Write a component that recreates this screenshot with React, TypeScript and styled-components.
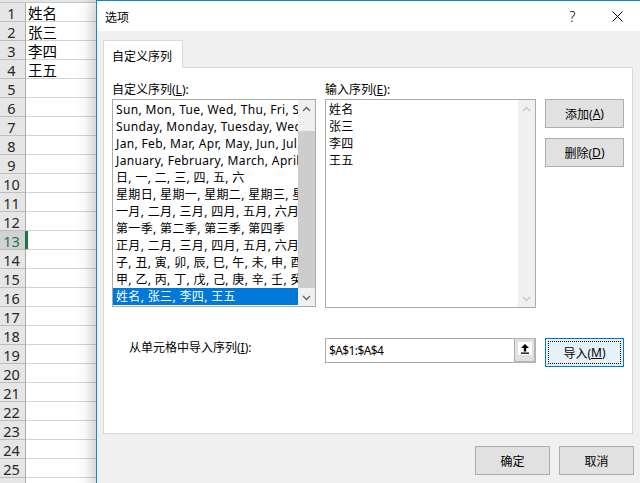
import styled, { createGlobalStyle } from 'styled-components';

const GlobalStyle = createGlobalStyle`
  html, body {
    margin: 0;
    padding: 0;
    width: 640px;
    height: 483px;
    overflow: hidden;
    background: #ffffff;
  }
  body {
    font-family: "Noto Sans", "Noto Sans CJK SC", sans-serif;
    color: #000;
  }
`;

const UI_FONT = `"Noto Sans", "Noto Sans CJK SC", sans-serif`;

// ---------- spreadsheet behind the dialog ----------
const Screen = styled.div`
  position: relative;
  width: 640px;
  height: 483px;
  overflow: hidden;
`;

const Sheet = styled.div`
  display: flex;
  flex-direction: column;
`;

const ColumnHeaderStrip = styled.div`
  height: 2px;
  width: 100%;
  background: #e6e6e6;
  border-bottom: 1px solid #c6c6c6;
`;

const SheetRow = styled.div`
  display: flex;
  height: 19px;
  flex-shrink: 0;
`;

const RowHeader = styled.div<{ $active?: boolean }>`
  box-sizing: border-box;
  width: 26px;
  height: 19px;
  background: ${(p) => (p.$active ? '#d2d2d2' : '#e6e6e6')};
  border-right: 1px solid ${(p) => (p.$active ? '#217346' : '#ababab')};
  border-bottom: 1px solid #bdbdbd;
  color: ${(p) => (p.$active ? '#217346' : '#262626')};
  font-family: "Noto Sans", sans-serif;
  font-size: 14.5px;
  line-height: 21px;
  text-align: center;
  padding-right: 2px;
  overflow: hidden;
`;

const Cell = styled.div<{ $active?: boolean }>`
  box-sizing: border-box;
  width: 200px;
  height: 19px;
  border-bottom: 1px solid #d4d4d4;
  box-shadow: ${(p) => (p.$active ? 'inset 2px 0 0 #217346' : 'none')};
  padding-left: 2px;
  font-family: "Noto Sans CJK SC", sans-serif;
  font-size: 14.5px;
  line-height: 20px;
  white-space: nowrap;
`;

// ---------- dialog window ----------
const Dialog = styled.div`
  position: absolute;
  left: 96px;
  top: 0;
  box-sizing: border-box;
  width: 544px;
  height: 490px;
  background: #f0f0f0;
  border-left: 1px solid #1883d7;
  border-top: 1px solid #1883d7;
  box-shadow: -4px 0 14px rgba(0, 0, 0, 0.22);
  font-family: ${UI_FONT};
  font-size: 12px;
`;

const TitleBar = styled.div`
  display: flex;
  align-items: center;
  height: 30px;
  background: #ffffff;
  padding-left: 8px;
`;

const TitleText = styled.div`
  flex: 1;
  font-size: 12px;
  padding-top: 1px;
`;

const TitleButton = styled.div`
  width: 45px;
  height: 30px;
  display: flex;
  align-items: center;
  justify-content: center;
  font-size: 14px;
  font-weight: 300;
`;

const Body = styled.div`
  padding: 9px 0 0 6px;
`;

const TabStrip = styled.div`
  display: flex;
`;

const Tab = styled.div`
  position: relative;
  z-index: 1;
  box-sizing: border-box;
  width: 80px;
  height: 28px;
  margin-bottom: -1px;
  padding: 6px 0 0 8px;
  background: #ffffff;
  border: 1px solid #d9d9d9;
  border-bottom: none;
`;

const Panel = styled.div`
  box-sizing: border-box;
  width: 530px;
  height: 367px;
  padding: 13px 0 0 8px;
  background: #ffffff;
  border: 1px solid #d9d9d9;
`;

const TopSection = styled.div`
  display: flex;
  align-items: flex-start;
`;

const Column = styled.div<{ $width: number; $gap?: number }>`
  width: ${(p) => p.$width}px;
  margin-left: ${(p) => p.$gap ?? 0}px;
`;

const FieldLabel = styled.div`
  height: 17px;
  line-height: 17px;
  margin-bottom: 1px;
  white-space: nowrap;
`;

const ListBox = styled.div<{ $height: number }>`
  box-sizing: border-box;
  display: flex;
  height: ${(p) => p.$height}px;
  border: 1px solid #ababab;
  background: #ffffff;
`;

const ListItems = styled.div`
  flex: 1;
  overflow: hidden;
  padding-top: 1px;
`;

const ListItem = styled.div<{ $selected?: boolean }>`
  height: 17px;
  line-height: 17px;
  padding-left: 3px;
  letter-spacing: 0.35px;
  white-space: nowrap;
  overflow: hidden;
  background: ${(p) => (p.$selected ? '#0078d7' : 'transparent')};
  color: ${(p) => (p.$selected ? '#ffffff' : '#000000')};
`;

const ScrollBar = styled.div`
  width: 17px;
  display: flex;
  flex-direction: column;
  background: #f0f0f0;
`;

const ScrollArrow = styled.div`
  height: 17px;
  display: flex;
  align-items: center;
  justify-content: center;
  flex-shrink: 0;
`;

const ScrollTrack = styled.div`
  flex: 1;
`;

const ScrollThumb = styled.div<{ $offset: number; $length: number }>`
  margin: ${(p) => p.$offset}px 0 0 0;
  height: ${(p) => p.$length}px;
  background: #cdcdcd;
`;

const ButtonColumn = styled.div`
  display: flex;
  flex-direction: column;
  gap: 10px;
  margin-left: 9px;
  padding-top: 18px;
`;

const Button = styled.div<{ $w?: number; $h?: number; $focused?: boolean }>`
  position: relative;
  box-sizing: border-box;
  width: ${(p) => p.$w ?? 79}px;
  height: ${(p) => p.$h ?? 29}px;
  display: flex;
  align-items: center;
  justify-content: center;
  background: ${(p) => (p.$focused ? '#e5f1fb' : '#e1e1e1')};
  border: 1px solid ${(p) => (p.$focused ? '#0078d7' : '#adadad')};
  white-space: nowrap;
  &::after {
    content: '';
    display: ${(p) => (p.$focused ? 'block' : 'none')};
    position: absolute;
    inset: 2px;
    border: 1px dotted #000;
  }
`;

const ImportRow = styled.div`
  display: flex;
  align-items: flex-start;
  margin-top: 30px;
`;

const ImportLabel = styled.div`
  box-sizing: border-box;
  width: 204px;
  padding: 1px 0 0 17px;
  line-height: 17px;
  white-space: nowrap;
`;

const RefEdit = styled.div`
  box-sizing: border-box;
  display: flex;
  width: 211px;
  height: 25px;
  margin-left: 9px;
  border: 1px solid #ababab;
  background: #fff;
`;

const RefText = styled.div`
  flex: 1;
  padding-left: 3px;
  line-height: 23px;
  letter-spacing: -0.6px;
`;

const RefButton = styled.div`
  box-sizing: border-box;
  width: 22px;
  margin: -1px -1px -1px 0;
  display: flex;
  align-items: flex-start;
  justify-content: center;
  padding-top: 3px;
  background: #e1e1e1;
  border: 2px solid #b4b4b4;
  border-top-width: 1px;
  border-left: 1px solid #adadad;
`;

const Footer = styled.div`
  display: flex;
  justify-content: flex-end;
  gap: 9px;
  width: 531px;
  margin-top: 12px;
`;

const Chevron = ({ up, color }: { up?: boolean; color: string }) => (
  <svg width="9" height="6" viewBox="0 0 9 6">
    <polyline
      points={up ? '1,5 4.5,1.5 8,5' : '1,1 4.5,4.5 8,1'}
      fill="none"
      stroke={color}
      strokeWidth="1.3"
    />
  </svg>
);

const CloseIcon = () => (
  <svg width="11" height="11" viewBox="0 0 11 11">
    <path d="M0.5 0.5 L10.5 10.5 M10.5 0.5 L0.5 10.5" stroke="#000" strokeWidth="1" />
  </svg>
);

const RefIcon = () => (
  <svg width="14" height="13" viewBox="0 0 14 13">
    <rect x="0" y="0" width="14" height="13" fill="#ffffff" />
    <path d="M7 2 L11 6 L8.2 6 L8.2 9.5 L5.8 9.5 L5.8 6 L3 6 Z" fill="#000" />
    <rect x="3" y="10.5" width="8" height="1.3" fill="#000" />
  </svg>
);

const customLists = [
  'Sun, Mon, Tue, Wed, Thu, Fri, Sat',
  'Sunday, Monday, Tuesday, Wednesday, Thursday, Friday, Saturday',
  'Jan, Feb, Mar, Apr, May, Jun, Jul, Aug, Sep, Oct, Nov, Dec',
  'January, February, March, April, May, June, July',
  '日, 一, 二, 三, 四, 五, 六',
  '星期日, 星期一, 星期二, 星期三, 星期四, 星期五, 星期六',
  '一月, 二月, 三月, 四月, 五月, 六月, 七月',
  '第一季, 第二季, 第三季, 第四季',
  '正月, 二月, 三月, 四月, 五月, 六月, 七月',
  '子, 丑, 寅, 卯, 辰, 巳, 午, 未, 申, 酉, 戌, 亥',
  '甲, 乙, 丙, 丁, 戊, 己, 庚, 辛, 壬, 癸',
  '姓名, 张三, 李四, 王五',
];

const entries = ['姓名', '张三', '李四', '王五'];
const cellValues = ['姓名', '张三', '李四', '王五'];

function App() {
  const rows = Array.from({ length: 26 }, (_, i) => i + 1);

  return (
    <Screen>
      <GlobalStyle />
      <Sheet>
        <ColumnHeaderStrip />
        {rows.map((n) => (
          <SheetRow key={n}>
            <RowHeader $active={n === 13}>{n}</RowHeader>
            <Cell $active={n === 13}>{cellValues[n - 1] ?? ''}</Cell>
          </SheetRow>
        ))}
      </Sheet>

      <Dialog>
        <TitleBar>
          <TitleText>选项</TitleText>
          <TitleButton>?</TitleButton>
          <TitleButton>
            <CloseIcon />
          </TitleButton>
        </TitleBar>

        <Body>
          <TabStrip>
            <Tab>自定义序列</Tab>
          </TabStrip>
          <Panel>
            <TopSection>
              <Column $width={204}>
                <FieldLabel>
                  自定义序列(<u>L</u>):
                </FieldLabel>
                <ListBox $height={208}>
                  <ListItems>
                    {customLists.map((item, i) => (
                      <ListItem key={i} $selected={i === customLists.length - 1}>
                        {item}
                      </ListItem>
                    ))}
                  </ListItems>
                  <ScrollBar>
                    <ScrollArrow>
                      <Chevron up color="#606060" />
                    </ScrollArrow>
                    <ScrollTrack>
                      <ScrollThumb $offset={14} $length={157} />
                    </ScrollTrack>
                    <ScrollArrow>
                      <Chevron color="#606060" />
                    </ScrollArrow>
                  </ScrollBar>
                </ListBox>
              </Column>

              <Column $width={211} $gap={9}>
                <FieldLabel>
                  输入序列(<u>E</u>):
                </FieldLabel>
                <ListBox $height={209}>
                  <ListItems>
                    {entries.map((e) => (
                      <ListItem key={e}>{e}</ListItem>
                    ))}
                  </ListItems>
                  <ScrollBar>
                    <ScrollArrow>
                      <Chevron up color="#c2c2c2" />
                    </ScrollArrow>
                    <ScrollTrack />
                    <ScrollArrow>
                      <Chevron color="#c2c2c2" />
                    </ScrollArrow>
                  </ScrollBar>
                </ListBox>
              </Column>

              <ButtonColumn>
                <Button>
                  添加(<u>A</u>)
                </Button>
                <Button>
                  删除(<u>D</u>)
                </Button>
              </ButtonColumn>
            </TopSection>

            <ImportRow>
              <ImportLabel>
                从单元格中导入序列(<u>I</u>):
              </ImportLabel>
              <RefEdit>
                <RefText>$A$1:$A$4</RefText>
                <RefButton>
                  <RefIcon />
                </RefButton>
              </RefEdit>
              <Column $width={79} $gap={9}>
                <Button $focused>
                  导入(<u>M</u>)
                </Button>
              </Column>
            </ImportRow>
          </Panel>

          <Footer>
            <Button $w={75} $h={29}>
              确定
            </Button>
            <Button $w={75} $h={29}>
              取消
            </Button>
          </Footer>
        </Body>
      </Dialog>
    </Screen>
  );
}

export default App;
